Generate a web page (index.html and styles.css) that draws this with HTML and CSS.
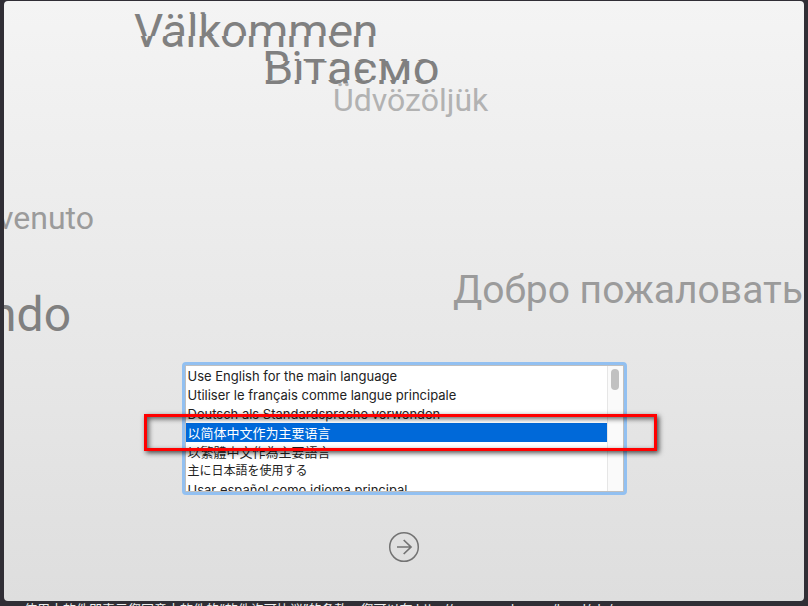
FILE: index.html
```
<!DOCTYPE html>
<html lang="zh-CN">
<head>
<meta charset="utf-8">
<title>Language</title>
<link rel="stylesheet" href="styles.css">
</head>
<body>
<main class="window">
  <div class="greetings">
    <span class="word torn valkommen" data-text="Välkommen"><span class="band">Välkommen</span></span>
    <span class="word torn vitaemo" data-text="Вітаємо"><span class="band">Вітаємо</span></span>
    <span class="word udvozoljuk">Üdvözöljük</span>
    <span class="word benvenuto">Benvenuto</span>
    <span class="word bemvindo">Bem-vindo</span>
    <span class="word dobro">Добро пожаловать</span>
  </div>
  <form class="chooser">
    <div class="picker">
      <select class="languages" size="7" aria-label="Language">
        <option>Use English for the main language</option>
        <option>Utiliser le français comme langue principale</option>
        <option>Deutsch als Standardsprache verwenden</option>
        <option class="cjk" selected>以简体中文作为主要语言</option>
        <option class="cjk" lang="zh-TW">以繁體中文作為主要語言</option>
        <option class="cjk" lang="ja">主に日本語を使用する</option>
        <option>Usar español como idioma principal</option>
        <option>Usa l’italiano come lingua principale</option>
        <option>Use o português como idioma principal</option>
        <option>Gebruik Nederlands als hoofdtaal</option>
        <option>Använd svenska som huvudspråk</option>
        <option>Bruk norsk som hovedspråk</option>
        <option>Brug dansk som hovedsprog</option>
        <option>Käytä pääkielenä suomea</option>
      </select>
      <div class="scrollbar"><div class="thumb"></div></div>
      <div class="highlight"></div>
    </div>
    <button class="next" type="button" aria-label="Continue">
      <svg width="32" height="32" viewBox="0 0 32 32" fill="none" stroke="#737373">
        <circle cx="16" cy="16" r="14.3" stroke-width="1.5"/>
        <path d="M9 16H23M15.7 9L23 16L15.7 23" stroke-width="1.7"/>
      </svg>
    </button>
  </form>
</main>
<p class="legal">使用本软件即表示您同意本软件的“软件许可协议”的条款，您可以在 http://www.apple.com/legal/sla/</p>
</body>
</html>
```
FILE: styles.css
```
* { box-sizing: border-box; }

body {
  margin: 0;
  height: 100vh;
  padding: 1px 4px 0;
  overflow: hidden;
  display: flex;
  flex-direction: column;
  background: #302e35;
  font-family: Inter, "Noto Sans CJK SC", sans-serif;
}

.window {
  position: relative;
  flex: none;
  height: calc(100vh - 6px);
  overflow: hidden;
  display: flex;
  flex-direction: column;
  justify-content: flex-end;
  border-radius: 4px;
  background: linear-gradient(#f4f4f4, #dedede);
}

.word {
  position: absolute;
  white-space: nowrap;
  font-family: Roboto, sans-serif;
  line-height: 1;
}

.valkommen { left: 130px; top: 7px; font-size: 46px; color: #808080; }
.vitaemo { left: 258px; top: 43px; font-size: 47px; color: #808080; }
.udvozoljuk { left: 329px; top: 83px; font-size: 32px; color: #b2b2b2; }
.benvenuto { right: 710px; top: 201px; font-size: 32px; color: #9b9b9b; }
.bemvindo { right: 733px; top: 290px; font-size: 48px; color: #808080; }
.dobro { right: 1px; top: 270px; font-size: 39px; color: #9b9b9b; }

/* Each torn word is drawn as horizontal bands that slide against each other. */
.torn .band { display: block; }

.torn::before,
.torn::after {
  content: attr(data-text);
  position: absolute;
  top: 0;
}

.valkommen .band { clip-path: inset(6px -8px 18px -8px); }
.valkommen::before { left: -1px; clip-path: inset(-8px -8px 40px -8px); }
.valkommen::after { left: -2px; clip-path: inset(28px -8px -8px -8px); }

.vitaemo .band { clip-path: inset(-8px -8px 30px -8px); }
.vitaemo::before { left: 2px; clip-path: inset(17px -8px 11px -8px); }
.vitaemo::after { left: 0; clip-path: inset(36px -8px -8px -8px); }

.chooser {
  display: flex;
  flex-direction: column;
  align-items: center;
  gap: 36px;
  padding-bottom: 38px;
}

.picker {
  position: relative;
  display: flex;
  width: 445px;
  padding: 1px;
  border: 3px solid #92c0f1;
  border-radius: 4px;
  background: #bfbfbf;
}

.languages {
  flex: 1;
  min-width: 0;
  height: 125px;
  margin: 0;
  padding: 0;
  border: 0;
  border-radius: 0;
  outline: none;
  background: #fff;
  color: #222;
  font-family: Inter, sans-serif;
  font-size: 13px;
}

.languages option {
  min-height: 19px;
  padding: 2px 2px 0;
  line-height: 17px;
}

.languages .cjk {
  padding-top: 0;
  font-family: "Noto Sans CJK SC", sans-serif;
  line-height: 19px;
}

.languages .cjk:lang(ja) { font-size: 12px; }

.languages option:checked {
  background: #0069d9 linear-gradient(#0069d9, #0069d9);
  color: #fff;
}

.scrollbar {
  width: 16px;
  padding: 3px 4px 3px 3px;
  border-left: 1px solid #e6e6e6;
  background: #fafafa;
}

.thumb {
  height: 21px;
  border-radius: 4px;
  background: #c1c1c1;
}

.highlight {
  position: absolute;
  left: -41px;
  right: -33px;
  top: 49px;
  height: 37px;
  border: 3px solid #f00;
  box-shadow: 2px 2px 5px rgba(0, 0, 0, .7), inset 2px 2px 5px rgba(0, 0, 0, .6);
  pointer-events: none;
}

.next {
  display: block;
  width: 32px;
  height: 32px;
  padding: 0;
  border: 0;
  background: none;
}

.next svg { display: block; }

.legal {
  margin: 0;
  padding-left: 20px;
  white-space: nowrap;
  font-size: 13px;
  line-height: 16px;
  color: #eee;
}
```
